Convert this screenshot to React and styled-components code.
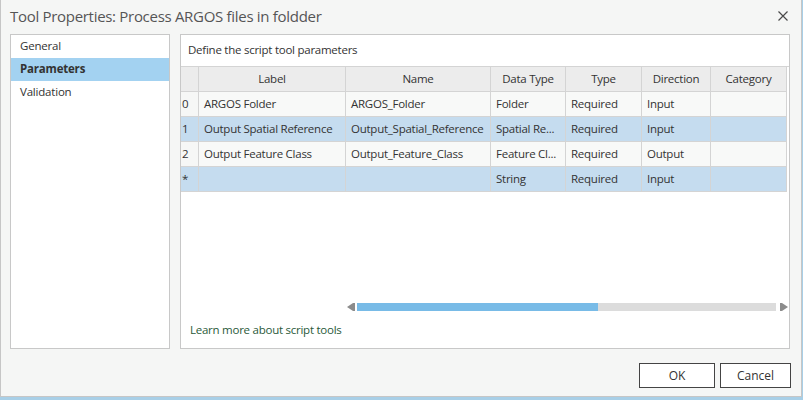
import React from "react";
import styled, { createGlobalStyle } from "styled-components";

const GlobalStyle = createGlobalStyle`
  html, body {
    margin: 0;
    padding: 0;
  }
  body {
    width: 803px;
    height: 400px;
    overflow: hidden;
    background: #a8cfe7;
    font-family: "Open Sans", "Noto Sans", sans-serif;
    color: #333;
  }
`;

const columns = [
  { key: "label", title: "Label", width: 147 },
  { key: "name", title: "Name", width: 145 },
  { key: "dataType", title: "Data Type", width: 75 },
  { key: "type", title: "Type", width: 76 },
  { key: "direction", title: "Direction", width: 69 },
  { key: "category", title: "Category", width: 76 },
];

const rows = [
  { id: "0", label: "ARGOS Folder", name: "ARGOS_Folder", dataType: "Folder", type: "Required", direction: "Input", category: "" },
  { id: "1", label: "Output Spatial Reference", name: "Output_Spatial_Reference", dataType: "Spatial Re...", type: "Required", direction: "Input", category: "", selected: true },
  { id: "2", label: "Output Feature Class", name: "Output_Feature_Class", dataType: "Feature Cl...", type: "Required", direction: "Output", category: "" },
  { id: "*", label: "", name: "", dataType: "String", type: "Required", direction: "Input", category: "", selected: true },
];

const navItems = ["General", "Parameters", "Validation"];

const ROW_HEADER = 18;
const gridTemplate = `${ROW_HEADER}px ${columns.map((c) => c.width + "px").join(" ")}`;

export default function App() {
  const thumbRatio = 0.576;
  return (
    <>
      <GlobalStyle />
      <Dialog>
        <TitleBar>
          <Title>Tool Properties: Process ARGOS files in foldder</Title>
          <CloseButton aria-label="Close">
            <svg width="10" height="10" viewBox="0 0 10 10">
              <path d="M0.5 0.5 L9.5 9.5 M9.5 0.5 L0.5 9.5" stroke="#4a4a4a" strokeWidth="1.2" />
            </svg>
          </CloseButton>
        </TitleBar>

        <Body>
          <NavPanel>
            {navItems.map((item) => (
              <NavItem key={item} $selected={item === "Parameters"}>
                {item}
              </NavItem>
            ))}
          </NavPanel>

          <ContentPanel>
            <Caption>Define the script tool parameters</Caption>
            <TableArea>
              <Grid $template={gridTemplate}>
                <HeaderCell />
                {columns.map((c) => (
                  <HeaderCell key={c.key}>{c.title}</HeaderCell>
                ))}
                {rows.map((r) => (
                  <React.Fragment key={r.id}>
                    <RowHeader $selected={r.selected}>{r.id}</RowHeader>
                    {columns.map((c) => (
                      <Cell key={c.key} $selected={r.selected}>
                        {r[c.key]}
                      </Cell>
                    ))}
                  </React.Fragment>
                ))}
              </Grid>
            </TableArea>

            <ScrollBar $offset={ROW_HEADER + columns[0].width}>
              <svg width="8" height="8" viewBox="0 0 8 8">
                <polygon points="0,4 6,0 6,8" fill="#8c8c8c" />
                <rect x="6" y="0" width="2" height="8" fill="#8c8c8c" />
              </svg>
              <Track>
                <Thumb style={{ width: `${thumbRatio * 100}%` }} />
              </Track>
              <svg width="8" height="8" viewBox="0 0 8 8">
                <rect x="0" y="0" width="2" height="8" fill="#8c8c8c" />
                <polygon points="8,4 2,0 2,8" fill="#8c8c8c" />
              </svg>
            </ScrollBar>

            <LinkRow>
              <Link href="#">Learn more about script tools</Link>
            </LinkRow>
          </ContentPanel>
        </Body>

        <Footer>
          <Button $width={76}>OK</Button>
          <Button $width={71}>Cancel</Button>
        </Footer>
      </Dialog>
    </>
  );
}

const Dialog = styled.div`
  box-sizing: border-box;
  width: 802px;
  height: 397px;
  background: #f5f6f5;
  border: 1px solid #c6c6c6;
  border-top: none;
  display: flex;
  flex-direction: column;
`;

const TitleBar = styled.div`
  height: 34px;
  display: flex;
  align-items: center;
  justify-content: space-between;
  padding: 0 13px 0 9px;
  box-sizing: border-box;
`;

const Title = styled.div`
  font-size: 15px;
  letter-spacing: -0.3px;
  color: #555;
  margin-top: -2px;
`;

const CloseButton = styled.div`
  display: flex;
  align-items: center;
  margin-top: -3px;
`;

const Body = styled.div`
  display: flex;
  gap: 10px;
  padding: 0 11px 0 9px;
  height: 315px;
`;

const NavPanel = styled.div`
  box-sizing: border-box;
  width: 160px;
  background: #fff;
  border: 1px solid #c8c8c8;
  display: flex;
  flex-direction: column;
`;

const NavItem = styled.div`
  height: 23px;
  line-height: 22px;
  padding-left: 9px;
  font-size: 11.5px;
  letter-spacing: -0.2px;
  color: #333;
  font-weight: ${(p) => (p.$selected ? 700 : 400)};
  background: ${(p) => (p.$selected ? "#a3d2f1" : "transparent")};
`;

const ContentPanel = styled.div`
  box-sizing: border-box;
  width: 610px;
  background: #fff;
  border: 1px solid #c8c8c8;
  display: flex;
  flex-direction: column;
`;

const Caption = styled.div`
  height: 31px;
  line-height: 30px;
  padding-left: 7px;
  font-size: 11.5px;
  letter-spacing: -0.25px;
  color: #333;
`;

const TableArea = styled.div`
  height: 237px;
  border-top: 1px solid #d4d4d4;
  box-sizing: border-box;
`;

const Grid = styled.div`
  display: grid;
  grid-template-columns: ${(p) => p.$template};
  grid-auto-rows: 25px;
`;

const BaseCell = styled.div`
  box-sizing: border-box;
  border-right: 1px solid #d4d4d4;
  border-bottom: 1px solid #d4d4d4;
  font-size: 11.5px;
  letter-spacing: -0.25px;
  line-height: 24px;
  white-space: nowrap;
  overflow: hidden;
  color: #333;
`;

const HeaderCell = styled(BaseCell)`
  background: #ececec;
  text-align: center;
`;

const RowHeader = styled(BaseCell)`
  padding-left: 1px;
  background: ${(p) => (p.$selected ? "#c5dcef" : "#f6f7f6")};
`;

const Cell = styled(BaseCell)`
  padding-left: 5px;
  background: ${(p) => (p.$selected ? "#c5dcef" : "#f8f9f8")};
`;

const ScrollBar = styled.div`
  display: flex;
  align-items: center;
  gap: 2px;
  height: 8px;
  padding-left: ${(p) => p.$offset + 1}px;
  padding-right: 1px;
`;

const Track = styled.div`
  flex: 1;
  height: 8px;
  background: #dcdcdc;
  margin-right: 2px;
`;

const Thumb = styled.div`
  height: 100%;
  background: #78bbe7;
`;

const LinkRow = styled.div`
  padding: 11px 9px 0;
  font-size: 11.5px;
  letter-spacing: -0.25px;
  line-height: 16px;
`;

const Link = styled.a`
  color: #2a5a3a;
  text-decoration: none;
`;

const Footer = styled.div`
  display: flex;
  justify-content: flex-end;
  gap: 5px;
  padding: 14px 10px 0 0;
`;

const Button = styled.button`
  box-sizing: border-box;
  width: ${(p) => p.$width}px;
  height: 25px;
  background: #fff;
  border: 1px solid #444;
  border-radius: 0;
  font-family: "Open Sans", "Noto Sans", sans-serif;
  font-size: 12px;
  color: #333;
  padding: 0;
`;
